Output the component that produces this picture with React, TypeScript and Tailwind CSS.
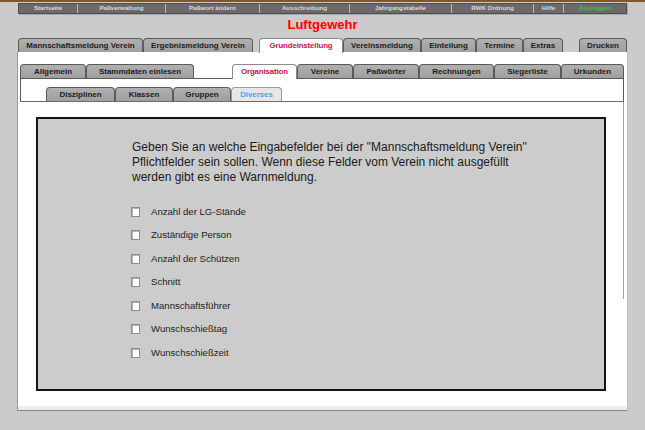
type NavItem = { label: string; w: string; green?: boolean };
type Tab = { label: string; w: string; active?: "red" | "blue"; spacer?: boolean };

const navItems: NavItem[] = [
  { label: "Startseite", w: "w-[59px]" },
  { label: "Paßverwaltung", w: "w-[88px]" },
  { label: "Paßwort ändern", w: "w-[94px]" },
  { label: "Ausschreibung", w: "w-[90px]" },
  { label: "Jahrgangstabelle", w: "w-[102px]" },
  { label: "RWK Ordnung", w: "w-[82px]" },
  { label: "Hilfe", w: "w-[30px]" },
  { label: "Ausloggen", w: "flex-1", green: true },
];

const mainTabs: Tab[] = [
  { label: "Mannschaftsmeldung Verein", w: "w-[125px]" },
  { label: "Ergebnismeldung Verein", w: "w-[110px]" },
  { label: "", w: "w-[6px]", spacer: true },
  { label: "Grundeinstellung", w: "w-[84px]", active: "red" },
  { label: "Vereinsmeldung", w: "w-[78px]" },
  { label: "Einteilung", w: "w-[55px]" },
  { label: "Termine", w: "w-[47px]" },
  { label: "Extras", w: "w-[40px]" },
  { label: "", w: "w-[16px]", spacer: true },
  { label: "Drucken", w: "w-[48px]" },
];

const subTabs: Tab[] = [
  { label: "Allgemein", w: "w-[66px]" },
  { label: "Stammdaten einlesen", w: "w-[108px]" },
  { label: "", w: "w-[38px]", spacer: true },
  { label: "Organisation", w: "w-[65px]", active: "red" },
  { label: "Vereine", w: "w-[56px]" },
  { label: "Paßwörter", w: "w-[66px]" },
  { label: "Rechnungen", w: "w-[75px]" },
  { label: "Siegerliste", w: "w-[67px]" },
  { label: "Urkunden", w: "w-[63px]" },
];

const thirdTabs: Tab[] = [
  { label: "Disziplinen", w: "w-[69px]" },
  { label: "Klassen", w: "w-[58px]" },
  { label: "Gruppen", w: "w-[58px]" },
  { label: "Diverses", w: "w-[51px]", active: "blue" },
];

const fields = [
  "Anzahl der LG-Stände",
  "Zuständige Person",
  "Anzahl der Schützen",
  "Schnitt",
  "Mannschaftsführer",
  "Wunschschießtag",
  "Wunschschießzeit",
];

function TabRow({ tabs }: { tabs: Tab[] }) {
  return (
    <div className="flex items-end">
      {tabs.map((t, i) => {
        if (t.spacer) return <div key={i} className={t.w} />;
        if (t.active === "red") {
          return (
            <div
              key={i}
              className={`${t.w} relative z-10 -mb-px flex h-[15px] items-center justify-center rounded-t-[4px] border border-b-0 border-[#8a8a8a] bg-white pb-px text-[7.8px] font-bold tracking-[-0.1px] text-[#c8104a]`}
            >
              {t.label}
            </div>
          );
        }
        if (t.active === "blue") {
          return (
            <div
              key={i}
              className={`${t.w} flex h-[14px] items-center justify-center rounded-t-[4px] border border-b-0 border-[#9a9a9a] bg-[#e6e6e6] text-[7.8px] font-bold text-[#4f9fea]`}
            >
              {t.label}
            </div>
          );
        }
        return (
          <div
            key={i}
            className={`${t.w} flex h-[14px] items-center justify-center rounded-t-[4px] border border-b-0 border-[#5a5a5a] bg-gradient-to-b from-[#b0b0b0] to-[#9f9f9f] text-[8px] font-bold text-[#1c1c1c]`}
          >
            {t.label}
          </div>
        );
      })}
    </div>
  );
}

export default function App() {
  return (
    <div className="h-[430px] w-[645px] overflow-hidden bg-[#cbcbcb] font-['Liberation_Sans',Arial,sans-serif]">
      <div className="h-[2px] bg-[#86561e]" />

      {/* top navigation */}
      <div className="ml-[18px] mt-[1px] flex h-[11px] w-[609px] border border-[#4e4e4e] shadow-[1px_1px_0_#a8a8a8]">
        {navItems.map((n) => (
          <div
            key={n.label}
            className={`${n.w} flex items-center justify-center border-r border-[#b8b8b8] bg-[#6a6a6a] text-[6.2px] font-bold leading-none last:border-r-0 ${
              n.green ? "text-[#3cc43c]" : "text-[#dcdcdc]"
            }`}
          >
            {n.label}
          </div>
        ))}
      </div>

      <div className="mt-[2px] h-[18px] text-center text-[13px] font-bold leading-[18px] text-[#ff0000]">
        Luftgewehr
      </div>

      <div className="ml-[18px] mt-[4px]">
        <TabRow tabs={mainTabs} />
      </div>

      {/* main panel */}
      <div className="ml-[17px] flex h-[359px] w-[611px] flex-col border-b border-l border-r border-b-[#8a8a8a] border-l-[#9a9a9a] border-r-[#c0c0c0] bg-white">
        <div className="flex-1 pl-[2px] pt-[12px]">
          <TabRow tabs={subTabs} />

          <div className="h-[23px] w-[604px] border-l border-r border-t border-[#5a5a5a] pl-[25px] pt-[8px]">
            <TabRow tabs={thirdTabs} />
          </div>

          <div className="flex w-[604px] border-t border-[#6a6a6a]">
            <div className="flex-1 pl-[16px] pt-[15px]">
              <div className="h-[274px] w-[570px] border-2 border-[#141414] bg-[#cccccc] pl-[93px] pt-[21px]">
                <p className="ml-[1px] text-[12px] leading-[15px] text-[#1a1a1a]">
                  Geben Sie an welche Eingabefelder bei der "Mannschaftsmeldung Verein"
                  <br />
                  Pflichtfelder sein sollen. Wenn diese Felder vom Verein nicht ausgefüllt
                  <br />
                  werden gibt es eine Warnmeldung.
                </p>

                <div className="mt-[15px] flex flex-col">
                  {fields.map((f) => (
                    <label key={f} className="flex h-[23.5px] items-center gap-[11px]">
                      <span className="h-[10px] w-[9px] border border-[#8c8c8c] bg-white shadow-[inset_1px_1px_0_#b4b4b4]" />
                      <span className="text-[9.6px] text-[#222222]">{f}</span>
                    </label>
                  ))}
                </div>
              </div>
            </div>
            <div className="h-[197px] w-px bg-[#a0a0a0]" />
          </div>
        </div>
        <div className="h-[4px] bg-[#ececec]" />
      </div>
    </div>
  );
}
